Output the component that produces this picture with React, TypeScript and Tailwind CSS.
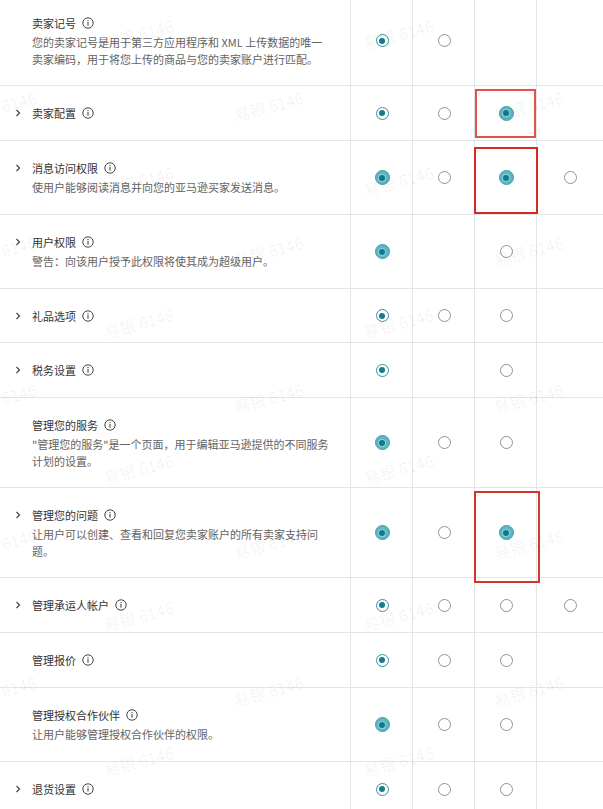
import React from "react";

type R = "ring" | "filled" | "empty" | null;

interface Row {
  title: string;
  desc?: string;
  chevron: boolean;
  h: string;
  radios: R[];
}

const rows: Row[] = [
  {
    title: "卖家记号",
    desc: "您的卖家记号是用于第三方应用程序和 XML 上传数据的唯一卖家编码，用于将您上传的商品与您的卖家账户进行匹配。",
    chevron: false,
    h: "h-[90px]",
    radios: ["ring", "empty", null, null],
  },
  { title: "卖家配置", chevron: true, h: "h-[55px]", radios: ["ring", "empty", "filled", null] },
  {
    title: "消息访问权限",
    desc: "使用户能够阅读消息并向您的亚马逊买家发送消息。",
    chevron: true,
    h: "h-[74px]",
    radios: ["filled", "empty", "filled", "empty"],
  },
  {
    title: "用户权限",
    desc: "警告：向该用户授予此权限将使其成为超级用户。",
    chevron: true,
    h: "h-[74px]",
    radios: ["filled", null, "empty", null],
  },
  { title: "礼品选项", chevron: true, h: "h-[54px]", radios: ["ring", "empty", "empty", null] },
  { title: "税务设置", chevron: true, h: "h-[55px]", radios: ["ring", null, "empty", null] },
  {
    title: "管理您的服务",
    desc: "\"管理您的服务\"是一个页面，用于编辑亚马逊提供的不同服务计划的设置。",
    chevron: false,
    h: "h-[90px]",
    radios: ["filled", "empty", "empty", null],
  },
  {
    title: "管理您的问题",
    desc: "让用户可以创建、查看和回复您卖家账户的所有卖家支持问题。",
    chevron: true,
    h: "h-[90px]",
    radios: ["filled", "empty", "filled", null],
  },
  { title: "管理承运人帐户", chevron: true, h: "h-[55px]", radios: ["ring", "empty", "empty", "empty"] },
  { title: "管理报价", chevron: false, h: "h-[55px]", radios: ["ring", "empty", "empty", null] },
  {
    title: "管理授权合作伙伴",
    desc: "让用户能够管理授权合作伙伴的权限。",
    chevron: false,
    h: "h-[74px]",
    radios: ["filled", "empty", "empty", null],
  },
  { title: "退货设置", chevron: true, h: "h-[55px]", radios: ["ring", "empty", "empty", null] },
];

function Radio({ kind }: { kind: R }) {
  if (!kind) return null;
  if (kind === "empty")
    return <span className="block w-[13px] h-[13px] rounded-full border border-[#8f9397] bg-white" />;
  if (kind === "ring")
    return (
      <span className="flex items-center justify-center w-[13px] h-[13px] rounded-full border border-[#2f95a2] bg-white">
        <span className="block w-[6px] h-[6px] rounded-full bg-[#167c8b]" />
      </span>
    );
  return (
    <span className="flex items-center justify-center w-[15px] h-[15px] rounded-full bg-[#5db6c2] border border-[#3e9fac]">
      <span className="flex items-center justify-center w-[8px] h-[8px] rounded-full bg-[#8fd0d8]">
        <span className="block w-[6px] h-[6px] rounded-full bg-[#13788a]" />
      </span>
    </span>
  );
}

function Info() {
  return (
    <svg width="12" height="12" viewBox="0 0 12 12" className="ml-[6px] shrink-0">
      <circle cx="6" cy="6" r="5.2" fill="none" stroke="#444" strokeWidth="1" />
      <rect x="5.45" y="5" width="1.1" height="3.6" fill="#444" />
      <rect x="5.45" y="3.1" width="1.1" height="1.1" fill="#444" />
    </svg>
  );
}

function Chevron() {
  return (
    <svg width="6" height="8" viewBox="0 0 6 8" className="block">
      <path d="M1.5 1 L4.5 4 L1.5 7" fill="none" stroke="#444" strokeWidth="1.2" />
    </svg>
  );
}

const marksA = [33, 180, 322, 468, 615, 760];
const marksB = [105, 250, 397, 543, 690];

function Watermark({ x, y }: { x: number; y: number }) {
  return (
    <span
      className="absolute whitespace-nowrap text-[16px] text-[#000000]/[0.06] -rotate-[15deg] select-none"
      style={{ left: x - 34, top: y - 11 }}
    >
      易银 6146
    </span>
  );
}

export default function App() {
  return (
    <div
      className="relative w-[603px] h-[809px] overflow-hidden bg-white"
      style={{ fontFamily: '"Noto Sans CJK SC", "Noto Sans", sans-serif' }}
    >
      <div className="-mt-[4px]">
        {rows.map((r, i) => (
          <div key={i} className={`flex ${r.h} border-b border-[#e3e6e6]`}>
            <div className="w-[351px] shrink-0 flex items-center pl-[15px] border-r border-[#e3e6e6]">
              <div className="flex">
                <div className="w-[17px] shrink-0 h-[18px] flex items-center">{r.chevron && <Chevron />}</div>
                <div>
                  <div className="flex items-center h-[18px] text-[11px] leading-[18px] text-[#333333]">
                    {r.title}
                    <Info />
                  </div>
                  {r.desc && (
                    <div className="mt-[2px] w-[298px] text-[11px] leading-[17px] text-[#636363]">{r.desc}</div>
                  )}
                </div>
              </div>
            </div>
            {r.radios.map((k, j) => (
              <div
                key={j}
                className={`${j === 3 ? "w-[66px]" : "w-[62px] border-r border-[#e3e6e6]"} shrink-0 flex items-center justify-center pl-[1px]`}
              >
                <Radio kind={k} />
              </div>
            ))}
          </div>
        ))}
      </div>

      <div className="pointer-events-none absolute inset-0">
        {marksA.map((y) => (
          <React.Fragment key={"a" + y}>
            <Watermark x={137} y={y} />
            <Watermark x={397} y={y} />
          </React.Fragment>
        ))}
        {marksB.map((y) => (
          <React.Fragment key={"b" + y}>
            <Watermark x={0} y={y} />
            <Watermark x={267} y={y} />
            <Watermark x={527} y={y} />
          </React.Fragment>
        ))}
      </div>

      <div className="pointer-events-none absolute left-[475px] top-[89px] w-[61px] h-[49px] border-2 border-[#e4514a]" />
      <div className="pointer-events-none absolute left-[474px] top-[147px] w-[64px] h-[67px] border-2 border-[#d42a20]" />
      <div className="pointer-events-none absolute left-[474px] top-[491px] w-[66px] h-[92px] border-2 border-[#d6342b]" />
    </div>
  );
}
